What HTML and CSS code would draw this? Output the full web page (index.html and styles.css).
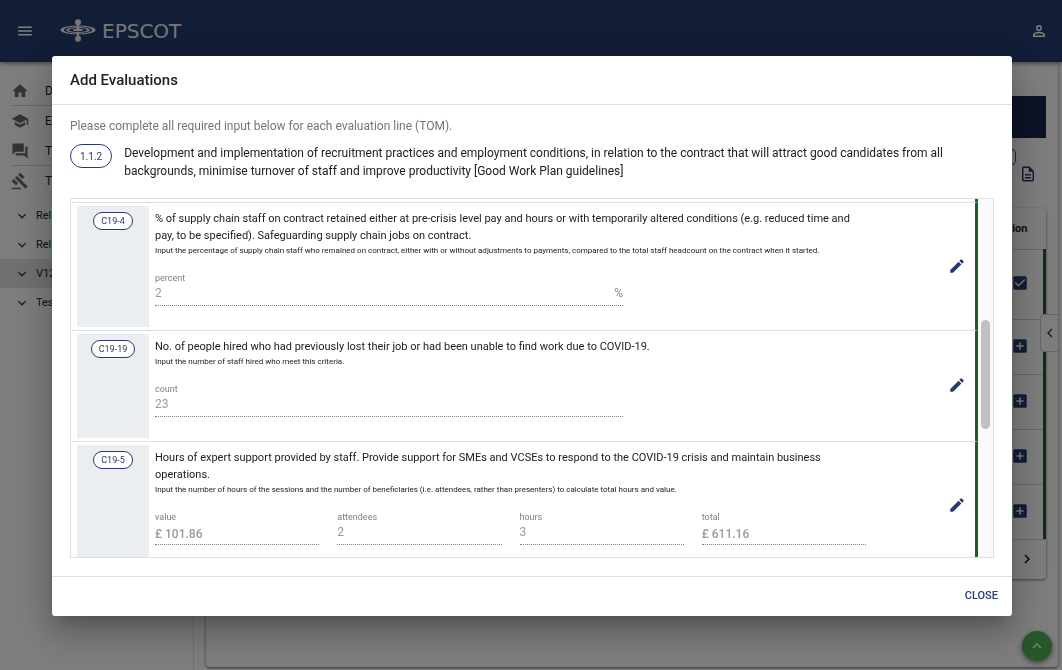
FILE: index.html
```html
<!DOCTYPE html>
<html lang="en">
<head>
  <meta charset="UTF-8">
  <meta name="viewport" content="width=device-width, initial-scale=1.0">
  <title>Add Evaluations</title>
  <link rel="stylesheet" href="styles.css">
</head>
<body>

  <!-- shared icons -->
  <svg class="sprite" aria-hidden="true">
    <symbol id="i-pencil" viewBox="0 0 24 24"><path d="M3 17.25V21h3.75L17.81 9.94l-3.75-3.75L3 17.25zM20.71 7.04a1 1 0 0 0 0-1.41l-2.34-2.34a1 1 0 0 0-1.41 0l-1.83 1.83 3.75 3.75 1.83-1.83z"/></symbol>
    <symbol id="i-down" viewBox="0 0 24 24"><path d="M7.41 8.59 12 13.17l4.59-4.58L18 10l-6 6-6-6z"/></symbol>
    <symbol id="i-plus" viewBox="0 0 24 24"><path d="M19 3H5a2 2 0 0 0-2 2v14a2 2 0 0 0 2 2h14a2 2 0 0 0 2-2V5a2 2 0 0 0-2-2zm-2 10h-4v4h-2v-4H7v-2h4V7h2v4h4v2z"/></symbol>
    <symbol id="i-check" viewBox="0 0 24 24"><path d="M19 3H5a2 2 0 0 0-2 2v14a2 2 0 0 0 2 2h14a2 2 0 0 0 2-2V5a2 2 0 0 0-2-2zm-9 14-5-5 1.41-1.41L10 14.17l7.59-7.59L19 8l-9 9z"/></symbol>
  </svg>

  <div class="page">
    <header class="topbar">
      <button class="icon-btn" type="button" aria-label="Menu">
        <svg width="18" height="18" viewBox="0 0 24 24"><path d="M3 18h18v-2H3v2zm0-5h18v-2H3v2zm0-7v2h18V6H3z"/></svg>
      </button>
      <a class="logo" href="#">
        <svg width="36" height="24" viewBox="0 0 36 24">
          <circle cx="18" cy="3.2" r="3"/>
          <circle cx="18" cy="19.800" r="3"/>
          <path d="M17.200 5h1.600l.7 5h-3zM17.200 18h1.600l.7-5h-3z"/>
          <path fill-rule="evenodd" d="M.5 11a17.500 4.500 0 0 1 35 0a17.500 4.500 0 0 1-35 0zM4 11a14 3.600 0 0 0 28 0a14 3.600 0 0 0-28 0z"/>
          <path fill-rule="evenodd" d="M6 11a12 3 0 0 1 24 0a12 3 0 0 1-24 0zM9 11a9 2 0 0 0 18 0a9 2 0 0 0-18 0z"/>
          <ellipse cx="18" cy="11" rx="5" ry="1.200"/>
        </svg>
        <span>EPSCOT</span>
      </a>
      <button class="icon-btn account" type="button" aria-label="Account">
        <svg width="18" height="18" viewBox="0 0 24 24"><path d="M12 5.900a2.100 2.100 0 1 1 0 4.200 2.100 2.100 0 0 1 0-4.200m0 9c2.970 0 6.100 1.460 6.100 2.100v1.100H5.900V17c0-.64 3.130-2.100 6.100-2.100M12 4a4 4 0 1 0 0 8 4 4 0 0 0 0-8zm0 9c-2.670 0-8 1.340-8 4v3h16v-3c0-2.660-5.330-4-8-4z"/></svg>
      </button>
    </header>

    <div class="body">
      <nav class="sidebar">
        <a class="nav-link line" href="#">
          <svg width="18" height="18" viewBox="0 0 24 24"><path d="M10 20v-6h4v6h5v-8h3L12 3 2 12h3v8z"/></svg>
          <span>D</span>
        </a>
        <a class="nav-link" href="#">
          <svg width="18" height="18" viewBox="0 0 24 24"><path d="M5 13.180v4L12 21l7-3.820v-4L12 17l-7-3.820zM12 3 1 9l11 6 9-4.910V17h2V9L12 3z"/></svg>
          <span>E</span>
        </a>
        <a class="nav-link line" href="#">
          <svg width="18" height="18" viewBox="0 0 24 24"><path d="M21 6h-2v9H6v2a1 1 0 0 0 1 1h11l4 4V7a1 1 0 0 0-1-1zm-4 6V3a1 1 0 0 0-1-1H3a1 1 0 0 0-1 1v14l4-4h10a1 1 0 0 0 1-1z"/></svg>
          <span>T</span>
        </a>
        <a class="nav-link" href="#">
          <svg width="18" height="18" viewBox="0 0 24 24"><path d="M1 21h12v2H1zM5.245 8.070l2.830-2.827 14.140 14.142-2.828 2.828zM12.317 1l5.657 5.656-2.830 2.830-5.654-5.660zM3.825 9.485l5.657 5.657-2.828 2.828-5.657-5.657z"/></svg>
          <span>T</span>
        </a>
        <a class="tree-link" href="#"><svg width="16" height="16"><use href="#i-down"/></svg>Rel</a>
        <a class="tree-link" href="#"><svg width="16" height="16"><use href="#i-down"/></svg>Rel</a>
        <a class="tree-link active" href="#"><svg width="16" height="16"><use href="#i-down"/></svg>V12</a>
        <a class="tree-link" href="#"><svg width="16" height="16"><use href="#i-down"/></svg>Tes</a>
      </nav>

      <main class="main">
        <div class="banner"></div>
        <div class="toolbar">
          <span class="pill"></span>
          <button class="icon-btn" type="button" aria-label="Report">
            <svg width="18" height="18" viewBox="0 0 24 24"><path d="M8 16h8v2H8zm0-4h8v2H8zm6-10H6a2 2 0 0 0-2 2v16a2 2 0 0 0 2 2h12a2 2 0 0 0 2-2V8l-6-6zm4 18H6V4h7v5h5v11z"/></svg>
          </button>
        </div>
        <div class="table-card">
          <table>
            <thead><tr><th>Action</th></tr></thead>
            <tbody>
              <tr class="tall"><td><button class="icon-btn" type="button" aria-label="Done"><svg width="18" height="18"><use href="#i-check"/></svg></button></td></tr>
              <tr><td><button class="icon-btn" type="button" aria-label="Add"><svg width="18" height="18"><use href="#i-plus"/></svg></button></td></tr>
              <tr><td><button class="icon-btn" type="button" aria-label="Add"><svg width="18" height="18"><use href="#i-plus"/></svg></button></td></tr>
              <tr><td><button class="icon-btn" type="button" aria-label="Add"><svg width="18" height="18"><use href="#i-plus"/></svg></button></td></tr>
              <tr><td><button class="icon-btn" type="button" aria-label="Add"><svg width="18" height="18"><use href="#i-plus"/></svg></button></td></tr>
            </tbody>
          </table>
          <div class="pager">
            <button class="icon-btn" type="button" aria-label="Next page">
              <svg width="18" height="18" viewBox="0 0 24 24"><path d="M8.590 16.590 13.170 12 8.590 7.410 10 6l6 6-6 6z"/></svg>
            </button>
          </div>
        </div>
        <button class="drawer-tab" type="button" aria-label="Open panel">
          <svg width="18" height="18" viewBox="0 0 24 24"><path d="M15.410 7.410 14 6l-6 6 6 6 1.410-1.410L10.830 12z"/></svg>
        </button>
      </main>
    </div>

    <button class="fab" type="button" aria-label="Back to top">
      <svg width="18" height="18" viewBox="0 0 24 24"><path d="M12 8l-6 6 1.410 1.410L12 10.830l4.590 4.580L18 14z"/></svg>
    </button>
  </div>

  <div class="backdrop">
    <section class="dialog" role="dialog" aria-modal="true" aria-labelledby="dialog-title">
      <h2 id="dialog-title">Add Evaluations</h2>

      <div class="dialog-body">
        <p class="hint">Please complete all required input below for each evaluation line (TOM).</p>
        <div class="measure">
          <span class="chip chip-lg">1.1.2</span>
          <p>Development and implementation of recruitment practices and employment conditions, in relation to the contract that will attract good candidates from all backgrounds, minimise turnover of staff and improve productivity [Good Work Plan guidelines]</p>
        </div>

        <div class="scroller">
          <div class="rows">
            <div class="row-end"></div>

            <article class="row">
              <div class="code"><span class="chip">C19-4</span></div>
              <div class="info">
                <h3>% of supply chain staff on contract retained either at pre-crisis level pay and hours or with temporarily altered conditions (e.g. reduced time and pay, to be specified). Safeguarding supply chain jobs on contract.</h3>
                <p>Input the percentage of supply chain staff who remained on contract, either with or without adjustments to payments, compared to the total staff headcount on the contract when it started.</p>
                <div class="fields">
                  <div class="field wide">
                    <label for="percent">percent</label>
                    <div class="control"><input id="percent" type="text" value="2" disabled><span>%</span></div>
                  </div>
                </div>
              </div>
              <button class="icon-btn edit" type="button" aria-label="Edit C19-4"><svg width="18" height="18"><use href="#i-pencil"/></svg></button>
            </article>

            <article class="row">
              <div class="code"><span class="chip">C19-19</span></div>
              <div class="info">
                <h3>No. of people hired who had previously lost their job or had been unable to find work due to COVID-19.</h3>
                <p>Input the number of staff hired who meet this criteria.</p>
                <div class="fields">
                  <div class="field wide">
                    <label for="count">count</label>
                    <div class="control"><input id="count" type="text" value="23" disabled></div>
                  </div>
                </div>
              </div>
              <button class="icon-btn edit" type="button" aria-label="Edit C19-19"><svg width="18" height="18"><use href="#i-pencil"/></svg></button>
            </article>

            <article class="row">
              <div class="code"><span class="chip">C19-5</span></div>
              <div class="info">
                <h3>Hours of expert support provided by staff. Provide support for SMEs and VCSEs to respond to the COVID-19 crisis and maintain business operations.</h3>
                <p>Input the number of hours of the sessions and the number of beneficiaries (i.e. attendees, rather than presenters) to calculate total hours and value.</p>
                <div class="fields">
                  <div class="field">
                    <label for="value">value</label>
                    <div class="control money"><input id="value" type="text" value="£ 101.86" disabled></div>
                  </div>
                  <div class="field">
                    <label for="attendees">attendees</label>
                    <div class="control"><input id="attendees" type="text" value="2" disabled></div>
                  </div>
                  <div class="field">
                    <label for="hours">hours</label>
                    <div class="control"><input id="hours" type="text" value="3" disabled></div>
                  </div>
                  <div class="field">
                    <label for="total">total</label>
                    <div class="control money"><input id="total" type="text" value="£ 611.16" disabled></div>
                  </div>
                </div>
              </div>
              <button class="icon-btn edit" type="button" aria-label="Edit C19-5"><svg width="18" height="18"><use href="#i-pencil"/></svg></button>
            </article>
          </div>
          <div class="track"><div class="thumb"></div></div>
        </div>
      </div>

      <footer class="dialog-foot">
        <button class="close" type="button">CLOSE</button>
      </footer>
    </section>
  </div>

</body>
</html>
```
FILE: styles.css
```css
* {
  box-sizing: border-box;
}

body {
  margin: 0;
  font-family: Roboto, "Liberation Sans", sans-serif;
  font-size: 12px;
  color: #212121;
  background: #fafafa;
}

h2, h3, p {
  margin: 0;
  font-weight: 400;
}

svg {
  display: block;
  fill: currentColor;
}

.sprite {
  display: none;
}

.icon-btn {
  padding: 0;
  border: 0;
  background: none;
  color: #233a73;
}

/* page behind the dialog */

.page {
  display: flex;
  flex-direction: column;
  height: 100vh;
  overflow: hidden;
}

.topbar {
  display: flex;
  align-items: center;
  flex: 0 0 62px;
  padding: 0 14px 0 16px;
  background: #243b6e;
  box-shadow: 0 2px 4px rgba(0, 0, 0, .4);
  z-index: 1;
}

.topbar .icon-btn {
  color: #fff;
}

.logo {
  display: flex;
  align-items: center;
  gap: 6px;
  margin-left: 26px;
  color: #eee;
  font-family: "DejaVu Sans", sans-serif;
  font-size: 20px;
  text-decoration: none;
}

.topbar .account {
  margin-left: auto;
}

.body {
  display: flex;
  flex: 1;
  min-height: 0;
}

.sidebar {
  flex: 0 0 194px;
  padding-top: 14px;
  border-right: 1px solid #ddd;
}

.nav-link {
  display: flex;
  align-items: center;
  gap: 16px;
  height: 30px;
  margin-left: 11px;
  color: #222;
  font-size: 12px;
  text-decoration: none;
}

.nav-link svg {
  color: #666;
}

.nav-link.line {
  border-bottom: 1px solid #d0d0d0;
}

.nav-link:nth-child(4) {
  margin-bottom: 5px;
}

.tree-link {
  display: flex;
  align-items: center;
  gap: 6px;
  height: 29px;
  padding-left: 14px;
  color: #222;
  font-size: 11px;
  text-decoration: none;
}

.tree-link svg {
  color: #233a73;
}

.tree-link.active {
  background: #e0e0e0;
}

.main {
  position: relative;
  flex: 1;
  margin: 0 4px 3px 12px;
  padding: 34px 12px 0;
  border-radius: 4px;
  box-shadow: 0 1px 3px rgba(0, 0, 0, .6);
}

.banner {
  height: 42px;
  background: #18264c;
}

.toolbar {
  display: flex;
  justify-content: flex-end;
  gap: 3px;
  height: 70px;
  padding: 11px 9px 0;
}

.pill {
  width: 60px;
  height: 16px;
  border: 1px solid #2b62a8;
  border-radius: 4px;
}

.toolbar .icon-btn {
  align-self: flex-start;
  margin-top: 16px;
}

.table-card {
  border-radius: 4px;
  box-shadow: 0 1px 3px rgba(0, 0, 0, .5);
}

table {
  width: 100%;
  border-collapse: collapse;
}

th {
  height: 41px;
  padding: 0 17px 0 0;
  font-size: 11px;
  font-weight: 700;
  text-align: right;
}

td {
  height: 55px;
  padding: 0 14px 2px 0;
  border-top: 1px solid #ccc;
  border-right: 3px solid #1b5e20;
}

td .icon-btn {
  display: block;
  margin-left: auto;
}

.tall td {
  height: 70px;
}

.pager {
  display: flex;
  align-items: center;
  justify-content: flex-end;
  height: 40px;
  padding: 0 10px 2px 0;
  border-top: 1px solid #ccc;
}

.pager .icon-btn {
  color: #111;
}

.drawer-tab {
  position: absolute;
  top: 252px;
  right: 0;
  width: 18px;
  height: 38px;
  padding: 0;
  border: 1px solid #ccc;
  border-right: 0;
  border-radius: 4px 0 0 4px;
  background: #fafafa;
  color: #444;
}

.fab {
  position: fixed;
  right: 10px;
  bottom: 9px;
  display: flex;
  align-items: center;
  justify-content: center;
  width: 30px;
  height: 30px;
  padding: 0;
  border: 0;
  border-radius: 50%;
  background: #4caf50;
  color: #fff;
  box-shadow: 0 2px 5px rgba(0, 0, 0, .5);
}

/* dialog */

.backdrop {
  position: fixed;
  inset: 0;
  z-index: 2;
  display: flex;
  padding: 56px 50px 54px 52px;
  background: rgba(0, 0, 0, .5);
}

.dialog {
  display: flex;
  flex: 1;
  flex-direction: column;
  min-width: 0;
  border-radius: 3px;
  background: #fff;
  box-shadow: 0 10px 15px -6px rgba(0, 0, 0, .2), 0 20px 32px 3px rgba(0, 0, 0, .14), 0 8px 38px 7px rgba(0, 0, 0, .12);
}

.dialog h2 {
  padding: 0 18px;
  font-size: 15px;
  font-weight: 500;
  line-height: 48px;
}

.dialog-body {
  display: flex;
  flex: 1;
  flex-direction: column;
  min-height: 0;
  padding: 12px 18px 18px;
  border-top: 1px solid #e0e0e0;
  border-bottom: 1px solid #e0e0e0;
}

.hint {
  color: #757575;
  font-size: 12px;
  line-height: 18px;
}

.measure {
  display: flex;
  align-items: flex-start;
  gap: 12px;
  margin: 9px 0 18px;
}

.measure p {
  font-size: 12px;
  line-height: 18px;
}

.chip {
  display: flex;
  align-items: center;
  height: 18px;
  padding: 0 7px;
  border: 1px solid #233a73;
  border-radius: 12px;
  background: #fff;
  color: #233a73;
  font-size: 9px;
}

.chip-lg {
  height: 24px;
  padding: 0 9px;
  font-size: 10px;
}

.scroller {
  display: flex;
  flex: 1;
  min-height: 0;
  border: 1px solid #e0e0e0;
}

.rows {
  flex: 1;
  overflow: hidden;
}

.row-end {
  height: 3px;
  border-right: 3px solid #1b5e20;
}

.row {
  display: grid;
  grid-template-columns: 72px 1fr 82px;
  column-gap: 6px;
  padding: 3px 9px 3px 6px;
  border-top: 1px solid #e0e0e0;
  border-right: 3px solid #1b5e20;
}

.code {
  display: flex;
  align-items: flex-start;
  justify-content: center;
  padding-top: 6px;
  background: #eaeef1;
}

.info {
  padding: 4px 12px 21px 0;
}

.info h3 {
  font-size: 11px;
  line-height: 17px;
}

.info p {
  font-size: 8px;
  line-height: 13px;
}

.fields {
  display: grid;
  grid-template-columns: repeat(12, 1fr);
  column-gap: 18px;
  margin-top: 15px;
}

.field {
  grid-column: span 3;
}

.field.wide {
  grid-column: span 8;
}

.field label {
  display: block;
  color: #808080;
  font-size: 9px;
  line-height: 12px;
}

.control {
  display: flex;
  align-items: center;
  height: 22px;
  padding-bottom: 4px;
  border-bottom: 1px dotted #808080;
  color: #8c8c8c;
}

.control input {
  flex: 1;
  min-width: 0;
  padding: 0;
  border: 0;
  background: none;
  color: #9a9a9a;
  font: inherit;
}

.control.money {
  padding-bottom: 0;
}

.money input {
  font-weight: 500;
}

.edit {
  align-self: center;
  justify-self: end;
  padding-bottom: 2px;
}

.track {
  width: 15px;
  padding: 121px 3px 0;
  background: #fafafa;
}

.thumb {
  height: 109px;
  border-radius: 5px;
  background: #c1c1c1;
}

.dialog-foot {
  display: flex;
  align-items: center;
  justify-content: flex-end;
  height: 39px;
  padding: 0 14px 2px;
}

.close {
  padding: 0;
  border: 0;
  background: none;
  color: #233a73;
  font-family: inherit;
  font-size: 11px;
  font-weight: 500;
}
```
